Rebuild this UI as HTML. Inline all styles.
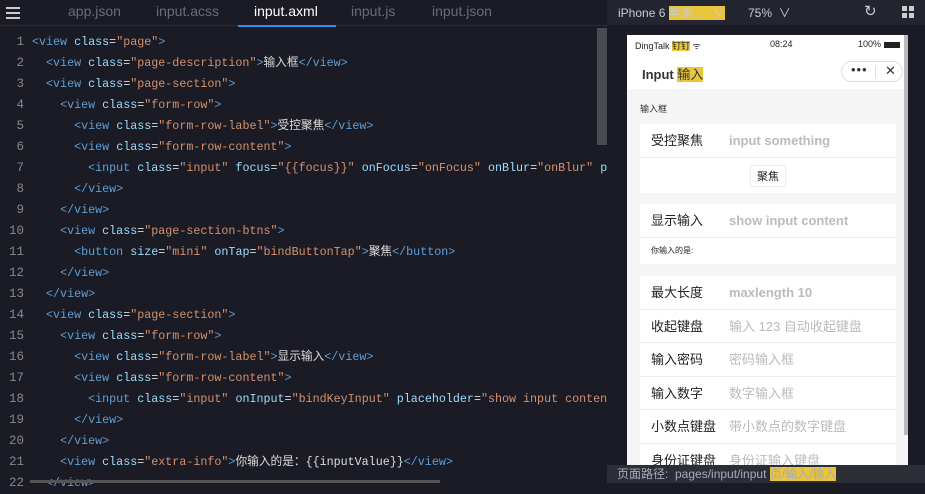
<!DOCTYPE html><html><head><meta charset="utf-8"><style>
*{margin:0;padding:0;box-sizing:border-box}
body{width:925px;height:483px;overflow:hidden;background:#1a1b24;font-family:"Liberation Sans","Noto Sans CJK SC",sans-serif;position:relative}
.tabs{position:absolute;left:0;top:0;width:607px;height:26px;background:#1a1b24;border-bottom:1px solid #2a2b33}
.tab{position:absolute;top:3px;font-size:14px;color:#6b6d75}
.ham{position:absolute;left:6px;top:7px;width:14px}
.ham i{display:block;height:2px;background:#ccc;margin-bottom:3px}
.code{position:absolute;left:0;top:32px;font-family:"Liberation Mono","Noto Sans CJK SC",monospace;font-size:11.7px;color:#ddd;white-space:pre}
.ln{position:absolute;left:0;width:24px;text-align:right;color:#888;font-size:12.5px}
.l{position:absolute;left:32px;height:21px;line-height:21px}
.t{color:#5f9fd6}.a{color:#9cdcfe}.s{color:#d4916f}
.right{position:absolute;left:607px;top:0;width:318px;height:483px;background:#1a1b24}
.top{position:absolute;left:0;top:0;width:318px;height:25px;background:#232530;color:#ccc;font-size:12px}
.phone{position:absolute;left:20px;top:35px;width:281px;height:430px;background:#f5f5f5;overflow:hidden}
.card{position:absolute;left:13px;width:256px;background:#fff}
.row{height:33.5px;line-height:33px;font-size:13px;color:#222;padding-left:11px;border-bottom:1px solid #eee;position:relative}
.row span{position:absolute;left:89px;color:#bbb;font-weight:bold}
.row span.n{font-weight:normal}
.hl{background:#e8c53a}
</style></head><body>
<div class="tabs">
<div class="ham"><i></i><i></i><i></i></div>
<div class="tab" style="left:68px">app.json</div>
<div class="tab" style="left:156px">input.acss</div>
<div class="tab" style="left:254px;color:#fff">input.axml</div>
<div class="tab" style="left:351px">input.js</div>
<div class="tab" style="left:432px">input.json</div>
<div style="position:absolute;left:238px;top:25px;width:98px;height:2px;background:#2f8ff0"></div>
</div>
<div style="position:absolute;left:597px;top:28px;width:10px;height:117px;background:#4a4b52"></div>
<div class="code">
<div class="ln" style="top:0;line-height:21px">1<br>2<br>3<br>4<br>5<br>6<br>7<br>8<br>9<br>10<br>11<br>12<br>13<br>14<br>15<br>16<br>17<br>18<br>19<br>20<br>21<br>22</div>
<div class="l" style="top:0"><span class="t">&lt;view</span> <span class="a">class</span>=<span class="s">"page"</span><span class="t">&gt;</span></div>
<div class="l" style="top:21px">  <span class="t">&lt;view</span> <span class="a">class</span>=<span class="s">"page-description"</span><span class="t">&gt;</span>输入框<span class="t">&lt;/view&gt;</span></div>
<div class="l" style="top:42px">  <span class="t">&lt;view</span> <span class="a">class</span>=<span class="s">"page-section"</span><span class="t">&gt;</span></div>
<div class="l" style="top:63px">    <span class="t">&lt;view</span> <span class="a">class</span>=<span class="s">"form-row"</span><span class="t">&gt;</span></div>
<div class="l" style="top:84px">      <span class="t">&lt;view</span> <span class="a">class</span>=<span class="s">"form-row-label"</span><span class="t">&gt;</span>受控聚焦<span class="t">&lt;/view&gt;</span></div>
<div class="l" style="top:105px">      <span class="t">&lt;view</span> <span class="a">class</span>=<span class="s">"form-row-content"</span><span class="t">&gt;</span></div>
<div class="l" style="top:126px">        <span class="t">&lt;input</span> <span class="a">class</span>=<span class="s">"input"</span> <span class="a">focus</span>=<span class="s">"{{focus}}"</span> <span class="a">onFocus</span>=<span class="s">"onFocus"</span> <span class="a">onBlur</span>=<span class="s">"onBlur"</span> <span class="a">p</span></div>
<div class="l" style="top:147px">      <span class="t">&lt;/view&gt;</span></div>
<div class="l" style="top:168px">    <span class="t">&lt;/view&gt;</span></div>
<div class="l" style="top:189px">    <span class="t">&lt;view</span> <span class="a">class</span>=<span class="s">"page-section-btns"</span><span class="t">&gt;</span></div>
<div class="l" style="top:210px">      <span class="t">&lt;button</span> <span class="a">size</span>=<span class="s">"mini"</span> <span class="a">onTap</span>=<span class="s">"bindButtonTap"</span><span class="t">&gt;</span>聚焦<span class="t">&lt;/button&gt;</span></div>
<div class="l" style="top:231px">    <span class="t">&lt;/view&gt;</span></div>
<div class="l" style="top:252px">  <span class="t">&lt;/view&gt;</span></div>
<div class="l" style="top:273px">  <span class="t">&lt;view</span> <span class="a">class</span>=<span class="s">"page-section"</span><span class="t">&gt;</span></div>
<div class="l" style="top:294px">    <span class="t">&lt;view</span> <span class="a">class</span>=<span class="s">"form-row"</span><span class="t">&gt;</span></div>
<div class="l" style="top:315px">      <span class="t">&lt;view</span> <span class="a">class</span>=<span class="s">"form-row-label"</span><span class="t">&gt;</span>显示输入<span class="t">&lt;/view&gt;</span></div>
<div class="l" style="top:336px">      <span class="t">&lt;view</span> <span class="a">class</span>=<span class="s">"form-row-content"</span><span class="t">&gt;</span></div>
<div class="l" style="top:357px">        <span class="t">&lt;input</span> <span class="a">class</span>=<span class="s">"input"</span> <span class="a">onInput</span>=<span class="s">"bindKeyInput"</span> <span class="a">placeholder</span>=<span class="s">"show input conten</span></div>
<div class="l" style="top:378px">      <span class="t">&lt;/view&gt;</span></div>
<div class="l" style="top:399px">    <span class="t">&lt;/view&gt;</span></div>
<div class="l" style="top:420px">    <span class="t">&lt;view</span> <span class="a">class</span>=<span class="s">"extra-info"</span><span class="t">&gt;</span>你输入的是：{{inputValue}}<span class="t">&lt;/view&gt;</span></div>
<div class="l" style="top:441px">  <span class="t">&lt;/view&gt;</span></div>
</div>
<div style="position:absolute;left:30px;top:480px;width:410px;height:3px;background:#555"></div>
<div class="right">
<div class="top">
<div style="position:absolute;left:11px;top:4px">iPhone 6 <span class="hl">苹果...&nbsp;&nbsp;&nbsp;∨</span></div>
<div style="position:absolute;left:141px;top:4px">75% &nbsp;∨</div>
<div style="position:absolute;left:257px;top:2px;font-size:15px">↻</div>
<div style="position:absolute;left:295px;top:6px;width:12px;height:12px;background:linear-gradient(#ccc,#ccc) 0 0/5px 5px no-repeat,linear-gradient(#ccc,#ccc) 7px 0/5px 5px no-repeat,linear-gradient(#ccc,#ccc) 0 7px/5px 5px no-repeat,linear-gradient(#ccc,#ccc) 7px 7px/5px 5px no-repeat"></div>
</div>
<div class="phone">
<div style="position:absolute;left:0;top:0;width:281px;height:54px;background:#fff"></div>
<div style="position:absolute;left:8px;top:4px;font-size:9px;color:#222">DingTalk <span class="hl">钉钉</span> ᯤ</div>
<div style="position:absolute;left:143px;top:4px;font-size:9px;color:#222">08:24</div>
<div style="position:absolute;left:231px;top:4px;font-size:9px;color:#222">100% <span style="display:inline-block;width:16px;height:6px;background:#222;vertical-align:middle"></span></div>
<div style="position:absolute;left:15px;top:29px;font-size:13px;color:#333;font-weight:bold">Input <span class="hl" style="font-weight:normal">输入</span></div>
<div style="position:absolute;left:214px;top:26px;width:62px;height:21px;border:1px solid #ddd;border-radius:11px;font-size:13px;color:#333"><span style="position:absolute;left:9px;top:0;letter-spacing:1px">•••</span><span style="position:absolute;left:33px;top:4px;width:1px;height:12px;background:#ddd"></span><span style="position:absolute;left:43px;top:1px">✕</span></div>
<div style="position:absolute;left:13px;top:67px;font-size:9px;color:#333">输入框</div>
<div class="card" style="top:89px"><div class="row">受控聚焦<span>input something</span></div><div style="height:35px;text-align:center;padding-top:7px"><span style="display:inline-block;border:1px solid #eee;font-size:11px;padding:2px 6px;color:#222">聚焦</span></div></div>
<div class="card" style="top:169px"><div class="row">显示输入<span>show input content</span></div><div style="height:26px;line-height:26px;font-size:8px;padding-left:11px;color:#222">你输入的是:</div></div>
<div class="card" style="top:241px;height:200px">
<div class="row">最大长度<span>maxlength 10</span></div>
<div class="row">收起键盘<span class="n">输入 123 自动收起键盘</span></div>
<div class="row">输入密码<span class="n">密码输入框</span></div>
<div class="row">输入数字<span class="n">数字输入框</span></div>
<div class="row">小数点键盘<span class="n">带小数点的数字键盘</span></div>
<div class="row">身份证键盘<span class="n">身份证输入键盘</span></div>
</div>
<div style="position:absolute;left:277px;top:0;width:4px;height:400px;background:#bbb"></div>
</div>
<div style="position:absolute;left:0;top:465px;width:318px;height:18px;background:#2b2d37;color:#aab;font-size:12px;line-height:18px;padding-left:10px">页面路径: &nbsp;pages/input/input <span class="hl">页/输入/输入</span></div>
</div>
</body></html>
